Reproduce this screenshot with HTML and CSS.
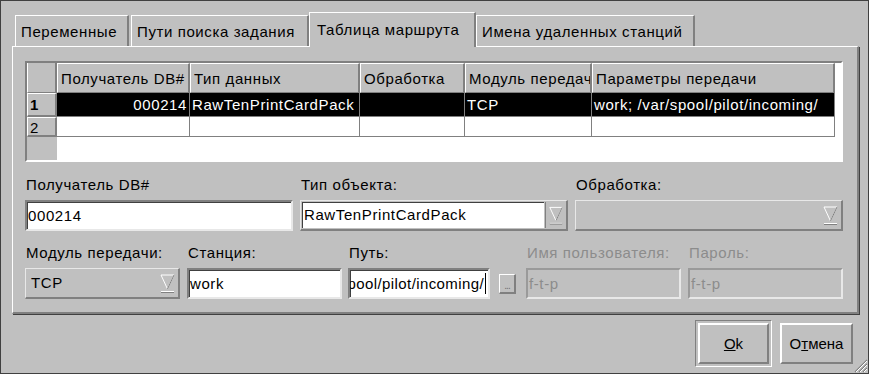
FILE: index.html
```html
<!DOCTYPE html>
<html lang="ru">
<head>
  <meta charset="UTF-8">
  <title>Таблица маршрута</title>
  <link rel="stylesheet" href="styles.css">
</head>
<body>

<div class="dialog">
  <!-- Tabs -->
  <div class="tabs">
    <div class="tab t1">Переменные</div>
    <div class="tab t2">Пути поиска задания</div>
    <div class="tab t3 active">Таблица маршрута</div>
    <div class="tab t4">Имена удаленных станций</div>
  </div>

  <div class="pane">
    <!-- Route table -->
    <div class="grid">
      <table>
        <colgroup>
          <col class="c0"><col class="c1"><col class="c2"><col class="c3"><col class="c4"><col class="c5"><col>
        </colgroup>
        <tr class="head">
          <th class="corner"></th>
          <th>Получатель DB#</th>
          <th>Тип данных</th>
          <th>Обработка</th>
          <th>Модуль передачи</th>
          <th>Параметры передачи</th>
          <td class="filler"></td>
        </tr>
        <tr class="row sel">
          <th class="num">1</th>
          <td class="right">000214</td>
          <td>RawTenPrintCardPack</td>
          <td></td>
          <td>TCP</td>
          <td>work; /var/spool/pilot/incoming/</td>
          <td class="filler"></td>
        </tr>
        <tr class="row second">
          <th class="num">2</th>
          <td></td><td></td><td></td><td></td><td></td>
          <td class="filler"></td>
        </tr>
        <tr class="rest">
          <th class="num-empty"></th>
          <td colspan="6" class="blank"></td>
        </tr>
      </table>
    </div>

    <!-- Form -->
    <div class="form-row first">
      <div class="field w268">
        <label>Получатель DB#</label>
        <div class="input">000214</div>
      </div>
      <div class="field w268">
        <label>Тип объекта:</label>
        <div class="combo editable">
          <div class="combo-text">RawTenPrintCardPack</div>
          <div class="arrow"><svg width="21" height="27" viewBox="0 0 21 27"><path d="M4 5 L17 5 L10.5 19 Z" fill="none" stroke="#ffffff" stroke-width="1"/><path d="M17 5 L10.5 19" stroke="#808080"/><rect x="4" y="21" width="13" height="2" fill="#808080"/><rect x="4" y="21" width="13" height="1" fill="#ffffff"/></svg></div>
        </div>
      </div>
      <div class="field w268">
        <label>Обработка:</label>
        <div class="combo disabled">
          <div class="combo-text"></div>
          <div class="arrow"><svg width="21" height="27" viewBox="0 0 21 27"><path d="M4 5 L17 5 L10.5 19 Z" fill="none" stroke="#ffffff" stroke-width="1"/><path d="M17 5 L10.5 19" stroke="#808080"/><rect x="4" y="21" width="13" height="2" fill="#808080"/><rect x="4" y="21" width="13" height="1" fill="#ffffff"/></svg></div>
        </div>
      </div>
    </div>

    <div class="form-row second">
      <div class="field w155">
        <label>Модуль передачи:</label>
        <div class="combo plain">
          <div class="combo-text">TCP</div>
          <div class="arrow flat"><svg width="21" height="27" viewBox="0 0 21 27"><path d="M4 5 L17 5 L10.5 19 Z" fill="none" stroke="#ffffff" stroke-width="1"/><path d="M17 5 L10.5 19" stroke="#808080"/><rect x="4" y="21" width="13" height="2" fill="#808080"/><rect x="4" y="21" width="13" height="1" fill="#ffffff"/></svg></div>
        </div>
      </div>
      <div class="field w155">
        <label>Станция:</label>
        <div class="input">work</div>
      </div>
      <div class="field w142 path">
        <label>Путь:</label>
        <div class="input clip"><span class="path-text">/var/spool/pilot/incoming/</span><span class="caret"></span></div>
      </div>
      <div class="field w17 browse">
        <label>&nbsp;</label>
        <div class="dots">...</div>
      </div>
      <div class="field w155 user">
        <label class="off">Имя пользователя:</label>
        <div class="input off">f-t-p</div>
      </div>
      <div class="field w155">
        <label class="off">Пароль:</label>
        <div class="input off">f-t-p</div>
      </div>
    </div>
  </div>

  <!-- Buttons -->
  <div class="buttons">
    <div class="default-frame"><button class="btn ok"><u>O</u>k</button></div>
    <button class="btn cancel">О<u>т</u>мена</button>
  </div>

  <svg class="grip" width="16" height="16" viewBox="0 0 16 16">
    <path d="M15 3 L3 15 M15 7 L7 15 M15 11 L11 15" stroke="#808080" stroke-width="1.2"/>
    <path d="M15 4 L4 15 M15 8 L8 15 M15 12 L12 15" stroke="#ffffff" stroke-width="1"/>
  </svg>
</div>

</body>
</html>
```

FILE: styles.css
```css
/* General Reset */
* {
  margin: 0;
  padding: 0;
  box-sizing: border-box;
  font-family: "Liberation Sans", Arial, sans-serif;
}

body {
  width: 869px;
  height: 374px;
  background: #c0c0c0;
  color: #000;
  font-size: 15px;
  letter-spacing: 0.6px;
  overflow: hidden;
}

.dialog {
  position: relative;
  width: 869px;
  height: 374px;
  border: 1px solid #404040;
  padding: 11px 9px 0 11px;
}

/* Tabs */
.tabs {
  display: flex;
  align-items: flex-end;
  height: 34px;
  padding-left: 3px;
}

.tab {
  height: 31px;
  padding: 7px 0 0 5px;
  margin-right: 2px;
  border-top: 1px solid #ffffff;
  border-left: 1px solid #ffffff;
  border-right: 2px solid #808080;
  white-space: nowrap;
  overflow: hidden;
  background: #c0c0c0;
}

.t1 { width: 114px; }
.t2 { width: 178px; }
.t3 { width: 167px; }
.t4 { width: 219px; }

.tab.active {
  height: 35px;
  padding: 8px 0 0 7px;
  margin: 0 0 -1px -2px;
  position: relative;
  z-index: 1;
}

.pane {
  height: 268px;
  border-top: 1px solid #ffffff;
  border-left: 1px solid #ffffff;
  border-right: 2px solid #808080;
  border-bottom: 2px solid #808080;
  box-shadow: 1px 1px 0 #404040;
  padding: 14px 14px 0 12px;
}

/* Route table */
.grid {
  width: 818px;
  height: 101px;
  border-top: 2px solid #808080;
  border-left: 2px solid #808080;
  border-right: 2px solid #ffffff;
  border-bottom: 2px solid #ffffff;
  box-shadow: inset 1px 1px 0 #404040;
  background: #ffffff;
  overflow: hidden;
}

.grid table {
  border-collapse: separate;
  border-spacing: 0;
  table-layout: fixed;
  width: 814px;
}

.c0 { width: 30px; }
.c1 { width: 133px; }
.c2 { width: 170px; }
.c3 { width: 105px; }
.c4 { width: 127px; }
.c5 { width: 243px; }

.grid th,
.grid td {
  white-space: nowrap;
  overflow: hidden;
  font-weight: normal;
  text-align: left;
  padding: 0 2px;
}

.head th {
  height: 30px;
  background: #c0c0c0;
  border-top: 1px solid #ffffff;
  border-left: 1px solid #ffffff;
  border-right: 2px solid #808080;
  border-bottom: 1px solid #808080;
  padding: 0 3px;
  text-overflow: clip;
}

.head th.corner {
  border-top: none;
}

.row td {
  border-right: 1px solid #808080;
  border-bottom: 1px solid #808080;
}

.row.sel td {
  height: 24px;
  background: #000;
  color: #fff;
}

.row.second td {
  height: 20px;
}

.row td.right {
  text-align: right;
}

.grid .filler,
.row td.filler {
  background: #ffffff;
  border: none;
}

.row th.num {
  background: #c0c0c0;
  border-top: 1px solid #ffffff;
  border-left: 1px solid #ffffff;
  border-right: 2px solid #808080;
  border-bottom: 2px solid #808080;
  font-size: 15px;
  padding: 0 2px;
}

.row.sel th.num {
  font-weight: bold;
}

.row.second th.num {
  vertical-align: bottom;
  line-height: 15px;
}

.rest th {
  height: 27px;
  background: #c0c0c0;
}

.rest td {
  background: #ffffff;
}

/* Form */
.form-row {
  display: flex;
  gap: 7px;
}

.form-row.first {
  margin-top: 14px;
}

.form-row.second {
  margin-top: 13px;
}

.field {
  display: flex;
  flex-direction: column;
  gap: 7px;
}

.field label {
  height: 17px;
  line-height: 17px;
  padding-left: 1px;
  white-space: nowrap;
}

.field label.off {
  color: #8c8c8c;
}

.w268 { width: 268px; }
.w155 { width: 155px; }
.w142 { width: 142px; }
.w17 { width: 17px; }

.field.path { margin-left: -1px; }
.field.browse { margin-left: 2px; }
.field.user { margin-left: 3px; }

.input {
  height: 31px;
  line-height: 27px;
  padding-left: 1px;
  background: #ffffff;
  border-top: 2px solid #808080;
  border-left: 2px solid #808080;
  border-right: 2px solid #e8e8e8;
  border-bottom: 2px solid #e8e8e8;
  box-shadow: inset 1px 1px 0 #404040;
  white-space: nowrap;
  overflow: hidden;
}

.input.clip {
  display: flex;
  justify-content: flex-end;
  padding-right: 2px;
}

.path-text {
  flex-shrink: 0;
  letter-spacing: 0.4px;
}

.caret {
  width: 1px;
  height: 21px;
  margin: 3px 0 0 1px;
  background: #000;
  flex-shrink: 0;
}

.input.off {
  background: #c0c0c0;
  color: #8c8c8c;
  border-top-color: #9a9a9a;
  border-left-color: #9a9a9a;
  border-right-color: #e8e8e8;
  border-bottom-color: #e8e8e8;
  box-shadow: none;
}

.combo {
  height: 31px;
  display: flex;
  border-top: 1px solid #e8e8e8;
  border-left: 1px solid #e8e8e8;
  border-right: 2px solid #808080;
  border-bottom: 2px solid #808080;
  background: #c0c0c0;
}

.combo-text {
  flex: 1;
  line-height: 24px;
  padding-left: 5px;
  white-space: nowrap;
  overflow: hidden;
}

.combo.editable .combo-text {
  margin: 1px;
  background: #ffffff;
  border-top: 1px solid #404040;
  border-left: 1px solid #404040;
  padding-left: 1px;
}

.combo.plain .combo-text {
  line-height: 28px;
  padding-left: 5px;
}

.arrow {
  width: 21px;
  display: flex;
  align-items: center;
  justify-content: center;
}

.combo.editable .arrow {
  border-left: 1px solid #808080;
  margin: 1px 0;
}

.dots {
  height: 20px;
  margin-top: 6px;
  border-top: 1px solid #ffffff;
  border-left: 1px solid #ffffff;
  border-right: 2px solid #808080;
  border-bottom: 2px solid #808080;
  font-size: 10px;
  line-height: 10px;
  color: #707070;
  text-align: center;
  letter-spacing: -1px;
  padding-top: 6px;
}

/* Buttons */
.buttons {
  display: flex;
  justify-content: flex-end;
  align-items: center;
  gap: 8px;
  padding: 6px 6px 0 0;
}

.default-frame {
  padding: 2px;
  border-top: 1px solid #808080;
  border-left: 1px solid #808080;
  border-right: 1px solid #ffffff;
  border-bottom: 1px solid #ffffff;
}

.btn {
  height: 41px;
  background: #c0c0c0;
  border-top: 2px solid #ffffff;
  border-left: 2px solid #ffffff;
  border-right: 2px solid #808080;
  border-bottom: 2px solid #808080;
  font-size: 15px;
  letter-spacing: 0;
  color: #000;
  font-family: "Liberation Sans", Arial, sans-serif;
}

.btn.ok {
  width: 71px;
}

.btn.cancel {
  width: 73px;
}

.grip {
  position: absolute;
  right: 0;
  bottom: 0;
}
```
